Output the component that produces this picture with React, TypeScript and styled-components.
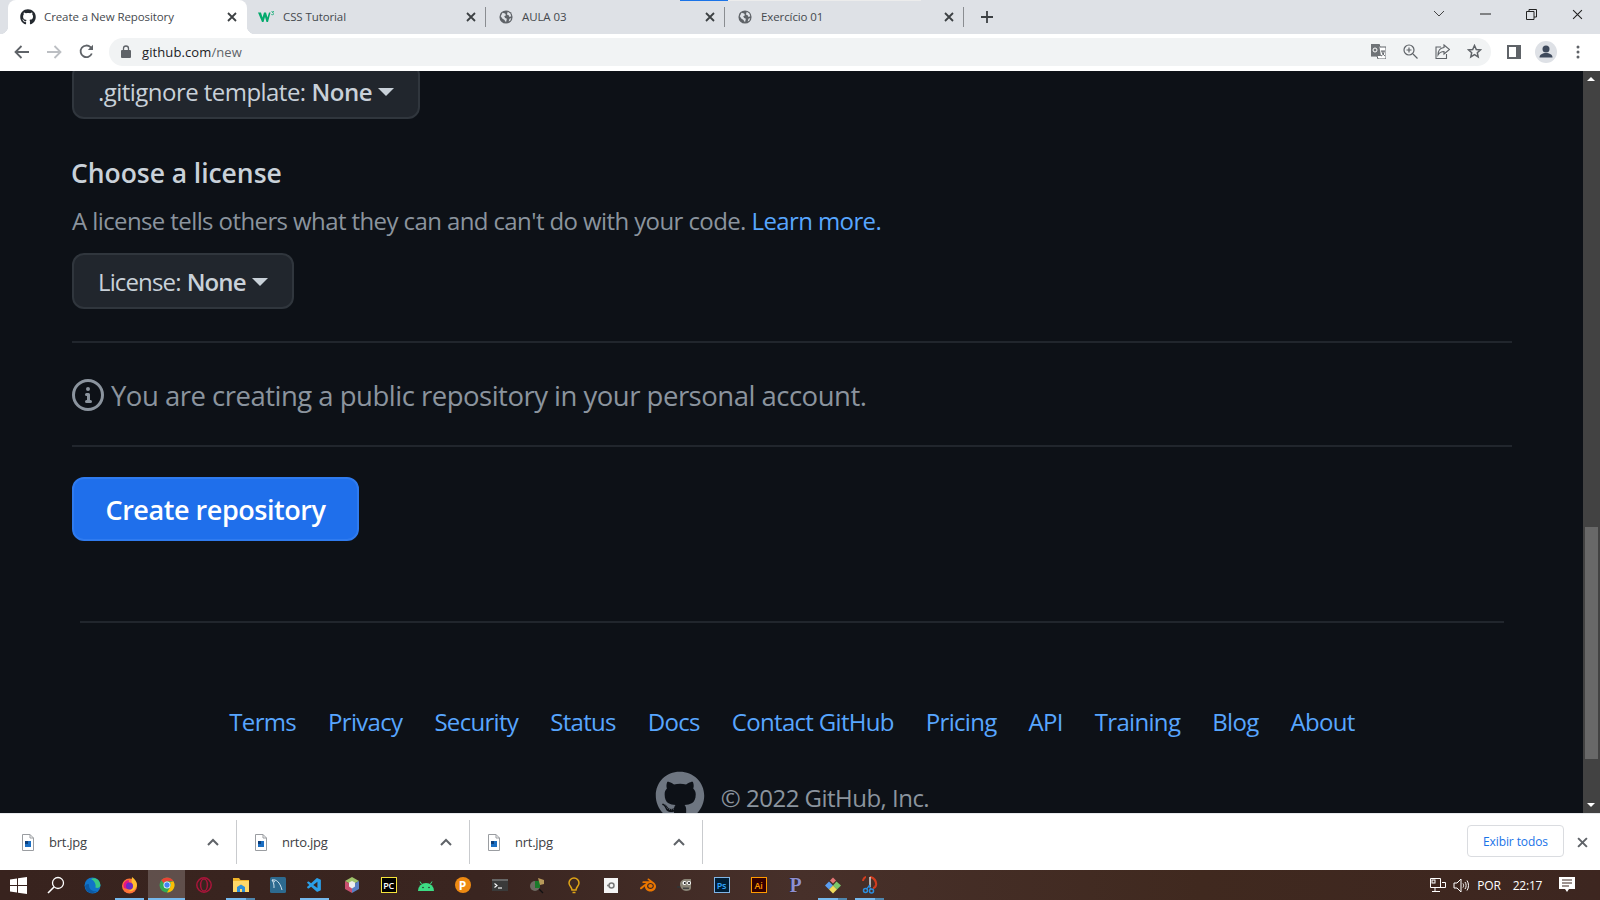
import React from "react";
import styled, { createGlobalStyle } from "styled-components";
import { FaGithub } from "react-icons/fa";
import { SiBlender } from "react-icons/si";
import { VscVscode } from "react-icons/vsc";

const ui = `"Open Sans", "Noto Sans", "Liberation Sans", sans-serif`;

const Global = createGlobalStyle`
  html, body { margin: 0; padding: 0; height: 100%; overflow: hidden; background: #0d1117; }
  #root { height: 100%; }
  * { box-sizing: border-box; }
`;

const Shell = styled.div`
  display: flex; flex-direction: column; width: 1600px; height: 900px; overflow: hidden;
  font-family: ${ui};
`;

/* tab strip */
const TabStrip = styled.div`
  position: relative; display: flex; flex: 0 0 34px; height: 34px; padding-left: 8px; background: #dee1e6;
`;
const LoadBar = styled.div`
  position: absolute; top: 0; left: 680px; width: 241px; height: 1px;
  background: linear-gradient(90deg, #1a73e8 0 48px, #ececec 48px 100%);
`;
const Tab = styled.div<{ $active?: boolean; $divider?: boolean }>`
  position: relative; flex: 0 0 239px; display: flex; align-items: center; height: 34px; padding: 0 0 2px 36px;
  font-size: 11.5px; letter-spacing: -0.1px; color: #45494e;
  background: ${p => (p.$active ? "#fff" : "transparent")};
  border-radius: 8px 8px 0 0;
  ${p => p.$divider && `&::after { content: ""; position: absolute; right: 0; top: 7px; height: 20px; width: 1px; background: #8a8d91; }`}
  ${p => p.$active && `
    &::before { content: ""; position: absolute; left: -8px; bottom: 0; width: 8px; height: 8px;
      background: radial-gradient(circle at 0 0, transparent 8px, #fff 8.5px); }
  `}
`;
const TabEdge = styled.span`
  position: absolute; right: -8px; bottom: 0; width: 8px; height: 8px;
  background: radial-gradient(circle at 100% 0, transparent 8px, #fff 8.5px);
`;
const FavSlot = styled.span<{ $left: number }>`
  position: absolute; left: ${p => p.$left}px; top: 9px; width: 16px; height: 16px;
  display: flex; align-items: center; justify-content: center; color: #24292f;
`;
const TabClose = styled.span`
  position: absolute; right: 10px; top: 12px; width: 10px; height: 10px; display: flex;
`;
const NewTab = styled.span`
  flex: 0 0 14px; margin: 10px 0 0 16px; height: 14px; display: flex;
`;
const WinControls = styled.div`
  margin-left: auto; display: flex; align-items: flex-start; height: 28px;
`;
const WinBtn = styled.span`
  flex: 0 0 46px; height: 28px; display: flex; align-items: center; justify-content: center;
`;

/* toolbar */
const Toolbar = styled.div`
  flex: 0 0 37px; display: flex; align-items: center; background: #fff; padding: 0 0 2px 6px;
`;
const NavBtn = styled.span`
  flex: 0 0 32px; height: 28px; display: flex; align-items: center; justify-content: center;
`;
const Omnibox = styled.div`
  flex: 0 0 1382px; margin-left: 7px; height: 28px; border-radius: 14px; background: #f1f3f4;
  display: flex; align-items: center; padding-left: 12px;
`;
const Url = styled.span`
  margin-left: 11px; font-size: 13px; letter-spacing: 0.1px; color: #202124;
`;
const UrlPath = styled.span` color: #5f6368; `;
const OmniActions = styled.div`
  margin-left: auto; display: flex; align-items: center; padding-right: 1px;
`;
const OmniBtn = styled.span`
  flex: 0 0 32px; height: 24px; display: flex; align-items: center; justify-content: center;
`;
const ToolRight = styled.div`
  display: flex; align-items: center; margin-left: 7px;
`;

/* page */
const Viewport = styled.div`
  flex: 1 1 auto; min-height: 0; display: flex; background: #0d1117; overflow: hidden;
`;
const Page = styled.main`
  flex: 0 0 1583px; height: 100%; overflow: hidden; padding: 0 71px 0 72px; color: #c9d1d9;
`;
const SelectBtn = styled.div<{ $top?: number; $tracking: number }>`
  display: inline-flex; align-items: center; height: 56px; padding: 0 24px;
  margin-top: ${p => p.$top ?? 0}px;
  background: #21262d; border: 2px solid #30363d; border-radius: 12px;
  font-size: 24px; letter-spacing: ${p => p.$tracking}px; color: #c9d1d9;
`;
const Bold = styled.b` font-weight: 600; margin-left: 6px; `;
const Caret = styled.span`
  width: 0; height: 0; margin-left: 6px; margin-top: 1px;
  border-left: 8px solid transparent; border-right: 8px solid transparent; border-top: 8px solid #c9d1d9;
`;
const Heading = styled.h3`
  margin: 37px 0 0 -1px; height: 34px; line-height: 34px; font-size: 26.5px; font-weight: 600; letter-spacing: -0.05px; color: #c9d1d9;
`;
const Note = styled.p`
  margin: 14px 0 15px; height: 34px; line-height: 34px; font-size: 24px; letter-spacing: -0.6px; color: #8b949e;
`;
const Link = styled.a` color: #58a6ff; text-decoration: none; `;
const Rule = styled.hr<{ $top: number }>`
  display: block; margin: ${p => p.$top}px 0 0; height: 2px; border: 0; background: #21262d;
`;
const InfoRow = styled.div`
  display: flex; align-items: center; gap: 7px; margin-top: 35px; height: 34px;
  font-size: 27.5px; letter-spacing: -0.5px; color: #8b949e;
`;
const PrimaryBtn = styled.div`
  display: inline-flex; align-items: center; justify-content: center; margin-top: 30px;
  width: 287px; height: 64px; border-radius: 12px; background: #1f6feb; border: 2px solid #2f7bef;
  font-size: 27px; font-weight: 600; letter-spacing: -0.45px; color: #fff;
`;
const FooterRule = styled.hr`
  display: block; margin: 80px 8px 0; height: 2px; border: 0; background: #21262d;
`;
const FooterLinks = styled.nav`
  display: flex; justify-content: center; gap: 32px; margin-top: 82px; height: 34px; line-height: 34px;
  font-size: 24px; letter-spacing: -0.69px;
`;
const Legal = styled.div`
  display: flex; justify-content: center; align-items: flex-start; gap: 16px; margin-top: 32px; height: 50px;
  color: #6e7681; font-size: 24px; letter-spacing: -0.52px;
`;
const LegalText = styled.span` line-height: 34px; margin-top: 10px; color: #8b949e; `;

/* scrollbar */
const Scrollbar = styled.div`
  flex: 0 0 17px; position: relative; height: 100%; background: #424242; display: flex; flex-direction: column; align-items: center;
`;
const ScrollArrow = styled.span<{ $down?: boolean }>`
  position: absolute; ${p => (p.$down ? "bottom: 6px" : "top: 6px")}; left: 4px; width: 0; height: 0;
  border-left: 4px solid transparent; border-right: 4px solid transparent;
  ${p => (p.$down ? "border-top: 4px solid #fff" : "border-bottom: 4px solid #fff")};
`;
const ScrollThumb = styled.div`
  position: absolute; left: 2px; right: 2px; top: 456px; height: 232px; background: #686868;
`;

/* downloads */
const Downloads = styled.div`
  flex: 0 0 57px; display: flex; align-items: center; background: #fff; padding-left: 4px; border-top: 1px solid #e8eaed;
`;
const DlItem = styled.div`
  flex: 0 0 233px; height: 44px; display: flex; align-items: center; padding: 0 18px; border-right: 1px solid #c9cbce;
  font-size: 13px; letter-spacing: -0.25px; color: #3c4043;
`;
const DlName = styled.span` margin-left: 15px; `;
const DlChevron = styled.span` margin-left: auto; display: flex; margin-right: -1px; `;
const ShowAll = styled.div`
  margin: 0 0 2px auto; display: flex; align-items: center; justify-content: center; width: 97px; height: 32px;
  border: 1px solid #dadce0; border-radius: 4px; font-size: 12px; color: #1a73e8; letter-spacing: -0.1px;
`;
const DlClose = styled.span` flex: 0 0 36px; display: flex; justify-content: center; `;

/* taskbar */
const Taskbar = styled.div`
  flex: 0 0 30px; display: flex; align-items: stretch; padding-left: 0;
  background: linear-gradient(90deg, #38231e 0%, #3a2520 30%, #47302a 50%, #40291f 75%, #3d2620 100%);
`;
const TaskCell = styled.span<{ $state?: "open" | "focus" | "stack" }>`
  position: relative; flex: 0 0 37px; display: flex; align-items: center; justify-content: center;
  ${p => p.$state === "focus" && "background: rgba(255,255,255,.2);"}
  ${p => p.$state && `&::after { content: ""; position: absolute; bottom: 0; height: 2px;
      left: ${p.$state === "focus" ? "0" : "4px"}; right: ${p.$state === "focus" ? "0" : "4px"};
      background: ${p.$state === "stack" ? "linear-gradient(90deg,#76b9ed 0 70%,#4f86ad 70% 100%)" : "#76b9ed"}; }`}
`;
const Tray = styled.div`
  margin-left: auto; display: flex; align-items: center; color: #fff; font-size: 12px;
`;
const TrayIcon = styled.span<{ $w: number }>`
  flex: 0 0 ${p => p.$w}px; display: flex; justify-content: center; align-items: center;
`;
const TrayText = styled.span<{ $w: number }>`
  flex: 0 0 ${p => p.$w}px; text-align: center; letter-spacing: -0.2px;
`;
const Badge = styled.span<{ $bg: string; $fg: string; $bd?: string; $size?: number }>`
  width: 16px; height: 16px; display: flex; align-items: center; justify-content: center;
  background: ${p => p.$bg}; color: ${p => p.$fg}; border: 1px solid ${p => p.$bd ?? p.$bg};
  font: 600 ${p => p.$size ?? 9}px "Open Sans", sans-serif; letter-spacing: -0.3px;
`;
const RoundP = styled.span`
  width: 16px; height: 16px; border-radius: 50%; background: #ee8a12; color: #fff; display: flex; align-items: center; justify-content: center;
  font: 700 12px "Open Sans", sans-serif;
`;
const SerifP = styled.span`
  font: 700 20px "Liberation Serif", serif; color: #8f8fd0; line-height: 20px; text-shadow: 0 0 1px #000;
`;
const TabGlobe = () => (
  <svg width="14" height="14" viewBox="0 0 16 16">
    <circle cx="8" cy="8" r="7.500" fill="#5f6368" />
    <path d="M4 3l3 1 1 2-2 1 1 2 2 1-1 4-2-3-2-1-2-3zM10 2l3 2 1 3-2 1-1-2-2-1zM12 10l2-1-1 3-2 1z" fill="#dee1e6" />
  </svg>
);
const X = ({ s = 10, c = "#3c4043", w = 1.8 }: { s?: number; c?: string; w?: number }) => (
  <svg width={s} height={s} viewBox="0 0 10 10"><path d="M1 1l8 8M9 1l-8 8" stroke={c} strokeWidth={w} fill="none" /></svg>
);
const FileIcon = () => (
  <svg width="12" height="17" viewBox="0 0 12 17">
    <path d="M.5.5h7.500l3.500 3.500v12.500h-11z" fill="#fff" stroke="#9a9da1" />
    <path d="M8 .5v3.500h3.500" fill="none" stroke="#9a9da1" />
    <rect x="3" y="7" width="6" height="6" fill="#1b6ec2" />
    <rect x="3" y="7" width="3" height="3" fill="#0c3f7c" />
  </svg>
);
const Chev = () => (
  <svg width="12" height="8" viewBox="0 0 12 8"><path d="M1 7l5-5 5 5" stroke="#5f6368" strokeWidth="2" fill="none" /></svg>
);

const WinLogo = () => (
  <svg width="17" height="17" viewBox="0 0 17 17" fill="#fff">
    <path d="M0 2.500l7-1v6.500h-7zM8 1.300l9-1.300v8h-9zM0 9h7v6.500l-7-1zM8 9h9v8l-9-1.300z" />
  </svg>
);
const SearchIc = () => (
  <svg width="18" height="18" viewBox="0 0 18 18" fill="none" stroke="#fff" strokeWidth="1.300">
    <circle cx="11" cy="7" r="5.500" /><path d="M7 11l-6 6" strokeWidth="1.600" />
  </svg>
);
const Edge = () => (
  <svg width="17" height="17" viewBox="0 0 17 17">
    <circle cx="8.500" cy="8.500" r="8" fill="#1173c9" />
    <path d="M7 2c4-2 9 1 9.400 6 .2 2.500-3 3.500-5 2.500 1-3-1-7-4.400-8.500z" fill="#39c785" />
    <path d="M5 8c0 5 4 7 8 6-5 4-11 2-12-5 1-2 4-3 4-1z" fill="#0c59a4" />
  </svg>
);
const Firefox = () => (
  <svg width="17" height="18" viewBox="0 0 17 18">
    <circle cx="8.500" cy="10" r="7.500" fill="#ff7139" />
    <path d="M11 1c3 2 5 5 5 8-1 5-5 7-9 6 5-1 6-5 4-8-1-2 0-4 0-6z" fill="#ffbd2f" />
    <path d="M3 12c-2-5 2-8 5-8-1 2 1 3 3 5-1 3-5 5-8 3z" fill="#e31587" />
    <circle cx="8.500" cy="10" r="3.500" fill="#6b2bc4" />
  </svg>
);
const Chrome = () => (
  <svg width="16" height="16" viewBox="0 0 16 16">
    <circle cx="8" cy="8" r="7.500" fill="#34a853" />
    <path d="M8 .5a7.500 7.500 0 016.500 3.750H8a3.750 3.750 0 00-3.300 2L2.200 3A7.500 7.500 0 018 .5z" fill="#ea4335" />
    <path d="M14.500 4.250A7.500 7.500 0 018 15.500l3.200-5.600A3.750 3.750 0 0011 5.200z" fill="#fbbc05" />
    <circle cx="8" cy="8" r="3.500" fill="#fff" /><circle cx="8" cy="8" r="2.700" fill="#4285f4" />
  </svg>
);
const Opera = () => (
  <svg width="16" height="16" viewBox="0 0 16 16" fill="none" stroke="#a9153a" strokeWidth="1.500">
    <circle cx="8" cy="8" r="7.200" /><ellipse cx="8" cy="8" rx="3.400" ry="6" />
  </svg>
);
const Folder = () => (
  <svg width="16" height="16" viewBox="0 0 16 16">
    <path d="M0 1h6l1.500 2H16v12H0z" fill="#f0b429" />
    <rect x="0" y="4" width="16" height="11" fill="#ffd868" />
    <path d="M4 15v-5l4-2.500 4 2.500v5h-3v-3h-2v3z" fill="#2c8fd8" />
  </svg>
);
const Workbench = () => (
  <svg width="16" height="16" viewBox="0 0 16 16">
    <rect width="16" height="16" rx="1.500" fill="#2d6a8f" />
    <path d="M2 3c4-1 8 2 10 10M2 3c2 3 2 5 2 8M2 3l3 2" stroke="#cfe2ee" strokeWidth="1" fill="none" />
  </svg>
);
const Cube = () => (
  <svg width="14" height="16" viewBox="0 0 14 16">
    <path d="M7 0l7 4-7 4-7-4z" fill="#9fc36a" />
    <path d="M0 4l7 4v8l-7-4z" fill="#c9506f" />
    <path d="M14 4l-7 4v8l7-4z" fill="#5a7fc4" />
    <path d="M4 5.500l3-1.500 3 1.500v4l-3 2-3-2z" fill="#eee" />
  </svg>
);
const Android = () => (
  <svg width="16" height="11" viewBox="0 0 16 11">
    <path d="M0 11a8 8 0 0116 0z" fill="#3ddc84" />
    <path d="M3.500 4L2 1.500M12.500 4L14 1.500" stroke="#3ddc84" strokeWidth="1" />
    <circle cx="5" cy="7.500" r=".8" fill="#2a2a2a" /><circle cx="11" cy="7.500" r=".8" fill="#2a2a2a" />
  </svg>
);
const Term = () => (
  <svg width="16" height="12" viewBox="0 0 16 12">
    <rect width="16" height="12" fill="#3a3a3a" /><rect width="16" height="2" fill="#666" />
    <path d="M2.500 4.500L5 6.500 2.500 8.500" stroke="#fff" fill="none" strokeWidth="1.100" />
    <path d="M6 9h4" stroke="#fff" strokeWidth="1.100" />
  </svg>
);
const Bug = () => (
  <svg width="16" height="17" viewBox="0 0 16 17">
    <circle cx="6" cy="9" r="5" fill="#6e6a62" />
    <path d="M6 4h5v7H6z" fill="#1a7a2a" />
    <path d="M9 1l6 2v4l-4 1z" fill="#b89a5a" />
    <path d="M10 12l4 4" stroke="#111" strokeWidth="1.300" />
  </svg>
);
const Bulb = () => (
  <svg width="12" height="17" viewBox="0 0 12 17" fill="none" stroke="#e0a516" strokeWidth="1.500">
    <path d="M6 1a5 5 0 00-5 5c0 3 3 4 3 7h4c0-3 3-4 3-7a5 5 0 00-5-5z" /><path d="M4.500 15.500h3" />
  </svg>
);
const Tile = () => (
  <svg width="14" height="15" viewBox="0 0 14 15">
    <rect width="14" height="15" fill="#f4f4f4" />
    <circle cx="7.500" cy="7.500" r="2.500" fill="none" stroke="#777" strokeWidth="1.500" /><circle cx="4" cy="7.500" r="1" fill="#777" />
  </svg>
);
const Gimp = () => (
  <svg width="15" height="14" viewBox="0 0 15 14">
    <path d="M3 6c0-3 3-5 6-5h5v9c0 2-2 3-5 3S3 10 3 6z" fill="#8a8577" />
    <circle cx="7.500" cy="5" r="2" fill="#fff" /><circle cx="12" cy="5" r="2" fill="#fff" />
    <circle cx="7.800" cy="5" r="1" fill="#111" /><circle cx="12" cy="5" r="1" fill="#111" />
    <path d="M0 8h3v2H0z" fill="#333" /><path d="M6 9.500h6v1.500H6z" fill="#444" />
  </svg>
);
const GitDiamond = () => (
  <svg width="16" height="17" viewBox="0 0 16 17">
    <path d="M5 3.500L8 .5l3 3-3 3z" fill="#e27474" />
    <path d="M8 8.500l3.500-4L16 8.500l-4 4z" fill="#7cc86a" />
    <path d="M0 8.500L4 4.500 8 8.500l-4 4z" fill="#5a9df0" />
    <path d="M4 12.500L8 8.500l4 4-4 4z" fill="#f1dc5c" />
  </svg>
);
const Snip = () => (
  <svg width="16" height="18" viewBox="0 0 16 18" fill="none">
    <path d="M8 1a7 7 0 016 8c-.5 2-2 3-3 3" stroke="#d13c1e" strokeWidth="2.200" />
    <path d="M4 1c-1 0-3 2-3 4" stroke="#d13c1e" strokeWidth="2" />
    <path d="M8 1v10" stroke="#ddd" strokeWidth="1.500" />
    <circle cx="3.500" cy="14.500" r="2" stroke="#2b8fe0" strokeWidth="1.500" /><circle cx="9.500" cy="15" r="2" stroke="#2b8fe0" strokeWidth="1.500" />
    <path d="M4.500 13L8 9M8.500 13L7 9" stroke="#2b8fe0" strokeWidth="1.200" />
  </svg>
);

const links = ["Terms", "Privacy", "Security", "Status", "Docs", "Contact GitHub", "Pricing", "API", "Training", "Blog", "About"];
const downloads = ["brt.jpg", "nrto.jpg", "nrt.jpg"];

export default function App() {
  return (
    <Shell>
      <Global />
      <TabStrip>
        <LoadBar />
        <Tab $active>
          <FavSlot $left={12}><FaGithub size={16} /></FavSlot>
          Create a New Repository
          <TabClose><X /></TabClose>
          <TabEdge />
        </Tab>
        <Tab $divider>
          <FavSlot $left={11}>
            <svg width="16" height="12" viewBox="0 0 16 12">
              <path d="M0 1.500h3l1.500 5 1.500-5h2l1.500 5 1.500-5h1.500l-2.500 9.500h-1.500L7 6l-1.500 5H4z" fill="#04aa6d" />
              <path d="M13 0h2.500v.6L14.300 1.500c1 0 1.500.5 1.500 1.200 0 1-1.500 1.300-2.500.8" fill="none" stroke="#04aa6d" strokeWidth=".8" />
            </svg>
          </FavSlot>
          CSS Tutorial
          <TabClose><X /></TabClose>
        </Tab>
        <Tab $divider>
          <FavSlot $left={12}><TabGlobe /></FavSlot>
          AULA 03
          <TabClose><X /></TabClose>
        </Tab>
        <Tab $divider>
          <FavSlot $left={12}><TabGlobe /></FavSlot>
          Exercício 01
          <TabClose><X /></TabClose>
        </Tab>
        <NewTab>
          <svg width="14" height="14" viewBox="0 0 14 14"><path d="M7 1v12M1 7h12" stroke="#3c4043" strokeWidth="1.800" /></svg>
        </NewTab>
        <WinControls>
          <WinBtn><svg width="12" height="8" viewBox="0 0 12 8"><path d="M1 1l5 5 5-5" stroke="#444" fill="none" /></svg></WinBtn>
          <WinBtn><svg width="11" height="2" viewBox="0 0 11 2"><path d="M0 1h11" stroke="#222" /></svg></WinBtn>
          <WinBtn><svg width="11" height="11" viewBox="0 0 11 11"><path d="M.5 2.500h7.500v8H.5zM3 2.500V.5h7.500v7.500H8" stroke="#222" fill="none" /></svg></WinBtn>
          <WinBtn><X s={11} c="#222" w={1} /></WinBtn>
        </WinControls>
      </TabStrip>

      <Toolbar>
        <NavBtn><svg width="16" height="14" viewBox="0 0 16 14"><path d="M15 7H2M7.500 1L1.500 7l6 6" stroke="#5f6368" strokeWidth="1.800" fill="none" /></svg></NavBtn>
        <NavBtn><svg width="16" height="14" viewBox="0 0 16 14"><path d="M1 7h13M8.500 1l6 6-6 6" stroke="#bcbfc3" strokeWidth="1.800" fill="none" /></svg></NavBtn>
        <NavBtn>
          <svg width="15" height="15" viewBox="0 0 15 15"><path d="M12.800 9.500A5.800 5.800 0 1111.500 3.200L13 4.700" stroke="#5f6368" strokeWidth="1.800" fill="none" /><path d="M14 .8v5.200H8.800z" fill="#5f6368" /></svg>
        </NavBtn>
        <Omnibox>
          <svg width="10" height="13" viewBox="0 0 10 13"><rect y="5" width="10" height="8" rx="1" fill="#5f6368" /><path d="M2.500 5V3.500a2.500 2.500 0 015 0V5" stroke="#5f6368" strokeWidth="1.300" fill="none" /></svg>
          <Url>github.com<UrlPath>/new</UrlPath></Url>
          <OmniActions>
            <OmniBtn>
              <svg width="15" height="15" viewBox="0 0 15 15"><path d="M0 0h8l1 3h6v12H7l-1-3H0z" fill="#fff" stroke="#5f6368" /><path d="M0 0h8l2 12H0z" fill="#6f7377" /><circle cx="4" cy="6" r="2" fill="none" stroke="#fff" /><path d="M10 7h4M11 7c0 3 2 4 3 5M13 7c0 3-1 4-3 5" stroke="#5f6368" fill="none" /></svg>
            </OmniBtn>
            <OmniBtn>
              <svg width="15" height="15" viewBox="0 0 15 15" fill="none" stroke="#5f6368" strokeWidth="1.200"><circle cx="6" cy="6" r="5" /><path d="M10 10l4.500 4.500M6 3.500v5M3.500 6h5" /></svg>
            </OmniBtn>
            <OmniBtn>
              <svg width="15" height="15" viewBox="0 0 15 15" fill="none" stroke="#5f6368" strokeWidth="1.100"><path d="M9 1l5.500 4.500L9 10V7.500c-3 0-4.500 1-6 3.500 0-4 2-7 6-7.500zM6 3H1v11.500h10.500V10" /></svg>
            </OmniBtn>
            <OmniBtn>
              <svg width="15" height="15" viewBox="0 0 15 15" fill="none" stroke="#5f6368" strokeWidth="1.500"><path d="M7.500 1.500l1.800 4 4.200.4-3.200 2.800.9 4.200-3.700-2.200-3.700 2.200.9-4.200L1.500 5.900l4.200-.4z" /></svg>
            </OmniBtn>
          </OmniActions>
        </Omnibox>
        <ToolRight>
          <NavBtn><svg width="14" height="14" viewBox="0 0 14 14"><rect width="14" height="14" fill="#5f6368" /><rect x="2" y="2" width="7" height="10" fill="#fff" /></svg></NavBtn>
          <NavBtn>
            <svg width="22" height="22" viewBox="0 0 22 22"><circle cx="11" cy="11" r="11" fill="#dee1e6" /><circle cx="11" cy="8" r="3.500" fill="#3f4a5c" /><path d="M4.500 16.500c0-3 3-4.500 6.500-4.500s6.500 1.500 6.500 4.500z" fill="#3f4a5c" /></svg>
          </NavBtn>
          <NavBtn><svg width="4" height="14" viewBox="0 0 4 14" fill="#5f6368"><circle cx="2" cy="2" r="1.500" /><circle cx="2" cy="7" r="1.500" /><circle cx="2" cy="12" r="1.500" /></svg></NavBtn>
        </ToolRight>
      </Toolbar>

      <Viewport>
        <Page>
          <SelectBtn $top={-8} $tracking={-0.54}>.gitignore template:<Bold>None</Bold><Caret /></SelectBtn>
          <Heading>Choose a license</Heading>
          <Note>A license tells others what they can and can't do with your code. <Link>Learn more.</Link></Note>
          <SelectBtn $tracking={-0.86}>License:<Bold>None</Bold><Caret /></SelectBtn>
          <Rule $top={32} />
          <InfoRow>
            <svg width="32" height="32" viewBox="0 0 16 16" fill="#8b949e">
              <path fillRule="evenodd" d="M8 1.500a6.500 6.500 0 100 13 6.500 6.500 0 000-13zM0 8a8 8 0 1116 0A8 8 0 010 8zm6.500-.25A.75.75 0 017.250 7h1a.75.75 0 01.75.75v2.750h.25a.75.75 0 010 1.500h-2a.75.75 0 010-1.500h.25v-2h-.25a.75.75 0 01-.75-.75zM8 6a1 1 0 100-2 1 1 0 000 2z" />
            </svg>
            You are creating a public repository in your personal account.
          </InfoRow>
          <Rule $top={33} />
          <PrimaryBtn>Create repository</PrimaryBtn>
          <FooterRule />
          <FooterLinks>{links.map(l => <Link key={l}>{l}</Link>)}</FooterLinks>
          <Legal>
            <FaGithub size={50} />
            <LegalText>© 2022 GitHub, Inc.</LegalText>
          </Legal>
        </Page>
        <Scrollbar>
          <ScrollArrow />
          <ScrollThumb />
          <ScrollArrow $down />
        </Scrollbar>
      </Viewport>

      <Downloads>
        {downloads.map(d => (
          <DlItem key={d}>
            <FileIcon />
            <DlName>{d}</DlName>
            <DlChevron><Chev /></DlChevron>
          </DlItem>
        ))}
        <ShowAll>Exibir todos</ShowAll>
        <DlClose><X s={11} c="#5f6368" /></DlClose>
      </Downloads>

      <Taskbar>
        <TaskCell><WinLogo /></TaskCell>
        <TaskCell><SearchIc /></TaskCell>
        <TaskCell><Edge /></TaskCell>
        <TaskCell $state="open"><Firefox /></TaskCell>
        <TaskCell $state="focus"><Chrome /></TaskCell>
        <TaskCell><Opera /></TaskCell>
        <TaskCell $state="stack"><Folder /></TaskCell>
        <TaskCell><Workbench /></TaskCell>
        <TaskCell $state="open"><VscVscode size={17} color="#2b9fe8" /></TaskCell>
        <TaskCell><Cube /></TaskCell>
        <TaskCell><Badge $bg="#000" $fg="#fff" $bd="#f5e23a">PC</Badge></TaskCell>
        <TaskCell><Android /></TaskCell>
        <TaskCell><RoundP>P</RoundP></TaskCell>
        <TaskCell><Term /></TaskCell>
        <TaskCell><Bug /></TaskCell>
        <TaskCell><Bulb /></TaskCell>
        <TaskCell><Tile /></TaskCell>
        <TaskCell><SiBlender size={16} color="#ea7600" /></TaskCell>
        <TaskCell><Gimp /></TaskCell>
        <TaskCell><Badge $bg="#001e36" $fg="#31a8ff" $bd="#7fb4e6">Ps</Badge></TaskCell>
        <TaskCell><Badge $bg="#330000" $fg="#ff9a00" $bd="#ff9a00">Ai</Badge></TaskCell>
        <TaskCell><SerifP>P</SerifP></TaskCell>
        <TaskCell $state="stack"><GitDiamond /></TaskCell>
        <TaskCell $state="stack"><Snip /></TaskCell>
        <Tray>
          <TrayIcon $w={24}>
            <svg width="16" height="15" viewBox="0 0 16 15" fill="none" stroke="#fff"><path d="M.5.5h10v9h-10zM12 4.500h3.500v5H9M5 10v3M2 13.500h8" /><rect x="2" y="2" width="3" height="3" /></svg>
          </TrayIcon>
          <TrayIcon $w={21}>
            <svg width="16" height="15" viewBox="0 0 16 15" fill="none" stroke="#fff"><path d="M1 5h3l4-4v13l-4-4H1zM10 5.500c.8 1.200.8 2.800 0 4M12 4c1.500 2 1.500 5 0 7M14 2.500c2 3 2 7 0 10" /></svg>
          </TrayIcon>
          <TrayText $w={36}>POR</TrayText>
          <TrayText $w={41}>22:17</TrayText>
          <TrayIcon $w={38}>
            <svg width="16" height="16" viewBox="0 0 16 16"><path d="M0 0h16v12h-6l-2 3-2-3H0z" fill="#fff" /><path d="M3 3h10M3 6h10M3 9h7" stroke="#3d2620" /></svg>
          </TrayIcon>
          <TrayIcon $w={14} />
        </Tray>
      </Taskbar>
    </Shell>
  );
}
